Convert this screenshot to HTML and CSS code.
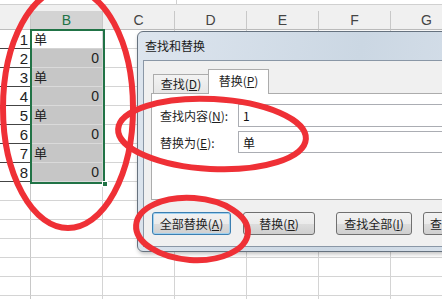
FILE: index.html
```html
<!DOCTYPE html>
<html lang="zh-CN">
<head>
  <meta charset="UTF-8" />
  <title>查找和替换</title>
  <link rel="stylesheet" href="styles.css">
</head>
<body>
  <div class="screen">
    <div class="formula-edge">
      <span class="seg seg-a"></span>
      <span class="seg seg-b"></span>
    </div>

    <div class="sheet">
      <div class="row heads">
        <div class="corner"></div>
        <div class="col-head picked">B</div>
        <div class="col-head">C</div>
        <div class="col-head">D</div>
        <div class="col-head">E</div>
        <div class="col-head">F</div>
        <div class="col-head">G</div>
      </div>

      <div class="row"><div class="rh on">1</div><div class="cell txt">单</div><div class="cell"></div><div class="cell"></div><div class="cell"></div><div class="cell"></div><div class="cell"></div></div>
      <div class="row"><div class="rh on">2</div><div class="cell sel num">0</div><div class="cell"></div><div class="cell"></div><div class="cell"></div><div class="cell"></div><div class="cell"></div></div>
      <div class="row"><div class="rh on">3</div><div class="cell sel txt">单</div><div class="cell"></div><div class="cell"></div><div class="cell"></div><div class="cell"></div><div class="cell"></div></div>
      <div class="row"><div class="rh on">4</div><div class="cell sel num">0</div><div class="cell"></div><div class="cell"></div><div class="cell"></div><div class="cell"></div><div class="cell"></div></div>
      <div class="row"><div class="rh on">5</div><div class="cell sel txt">单</div><div class="cell"></div><div class="cell"></div><div class="cell"></div><div class="cell"></div><div class="cell"></div></div>
      <div class="row"><div class="rh on">6</div><div class="cell sel num">0</div><div class="cell"></div><div class="cell"></div><div class="cell"></div><div class="cell"></div><div class="cell"></div></div>
      <div class="row"><div class="rh on">7</div><div class="cell sel txt">单</div><div class="cell"></div><div class="cell"></div><div class="cell"></div><div class="cell"></div><div class="cell"></div></div>
      <div class="row"><div class="rh on">8</div><div class="cell sel num">0</div><div class="cell"></div><div class="cell"></div><div class="cell"></div><div class="cell"></div><div class="cell"></div></div>
      <div class="row"><div class="rh"></div><div class="cell"></div><div class="cell"></div><div class="cell"></div><div class="cell"></div><div class="cell"></div><div class="cell"></div></div>
      <div class="row"><div class="rh"></div><div class="cell"></div><div class="cell"></div><div class="cell"></div><div class="cell"></div><div class="cell"></div><div class="cell"></div></div>
      <div class="row"><div class="rh"></div><div class="cell"></div><div class="cell"></div><div class="cell"></div><div class="cell"></div><div class="cell"></div><div class="cell"></div></div>
      <div class="row"><div class="rh"></div><div class="cell"></div><div class="cell"></div><div class="cell"></div><div class="cell"></div><div class="cell"></div><div class="cell"></div></div>
      <div class="row"><div class="rh"></div><div class="cell"></div><div class="cell"></div><div class="cell"></div><div class="cell"></div><div class="cell"></div><div class="cell"></div></div>
      <div class="row"><div class="rh"></div><div class="cell"></div><div class="cell"></div><div class="cell"></div><div class="cell"></div><div class="cell"></div><div class="cell"></div></div>
      <div class="row"><div class="rh"></div><div class="cell"></div><div class="cell"></div><div class="cell"></div><div class="cell"></div><div class="cell"></div><div class="cell"></div></div>
    </div>

    <!-- selected range B1:B8 -->
    <div class="selection"><span class="handle"></span></div>

    <div class="dialog">
      <div class="title">查找和替换</div>
      <div class="client">
        <div class="tabs">
          <div class="tab">查找(<u>D</u>)</div>
          <div class="tab current">替换(<u>P</u>)</div>
        </div>
        <div class="panel">
          <div class="field">
            <label>查找内容(<u>N</u>):</label>
            <input type="text" class="box" value="1" readonly>
          </div>
          <div class="field">
            <label>替换为(<u>E</u>):</label>
            <input type="text" class="box short" value="单" readonly>
          </div>
        </div>
        <div class="buttons">
          <button class="btn default">全部替换(<u>A</u>)</button>
          <button class="btn w72">替换(<u>R</u>)</button>
          <button class="btn w76">查找全部(<u>I</u>)</button>
          <button class="btn w100">查找下一个(<u>F</u>)</button>
        </div>
      </div>
    </div>

    <svg class="marks" width="442" height="299" viewBox="0 0 442 299">
      <ellipse cx="68" cy="108" rx="65" ry="120" />
      <ellipse cx="212" cy="134" rx="94" ry="35" transform="rotate(3 212 134)" />
      <ellipse cx="192" cy="229" rx="56" ry="31" transform="rotate(4 192 229)" />
    </svg>
  </div>
</body>
</html>
```

FILE: styles.css
```css
* {
  box-sizing: border-box;
  margin: 0;
  padding: 0;
}

body {
  background: #fff;
  font-family: "Liberation Sans", "Noto Sans CJK SC", sans-serif;
  color: #222;
}

.screen {
  position: relative;
  width: 442px;
  height: 299px;
  overflow: hidden;
  background: #f0f0f0;
}

/* bottom edge of the formula bar */
.formula-edge {
  height: 5px;
  background: #fff;
  border-bottom: 1px solid #d0d0d0;
  display: flex;
}

.seg {
  height: 4px;
  border-right: 1px solid #d0d0d0;
}

.seg-a { width: 38px; }
.seg-b { width: 139px; }

.sheet {
  margin-top: 6px;
}

.row {
  display: flex;
  height: 19px;
}

.heads {
  background: #f0f0f0;
}

.corner {
  width: 31px;
  flex: none;
  border-right: 1px solid #c8c8c8;
  border-bottom: 1px solid #bdbdbd;
}

.col-head {
  width: 72px;
  flex: none;
  border-right: 1px solid #c8c8c8;
  border-bottom: 1px solid #bdbdbd;
  text-align: center;
  font-size: 14px;
  line-height: 19px;
  color: #444;
}

.col-head.picked {
  background: #d3d3d3;
  color: #217346;
  border-bottom-color: #217346;
}

.rh {
  width: 31px;
  flex: none;
  background: #fff;
  border-right: 1px solid #c8c8c8;
  border-bottom: 1px solid #d4d4d4;
  text-align: right;
  padding-right: 2px;
  font-size: 15px;
  line-height: 19px;
  color: #222;
}

.rh.on {
  border-bottom-color: #444;
}

.cell {
  width: 72px;
  flex: none;
  background: #fff;
  border-right: 1px solid #d4d4d4;
  border-bottom: 1px solid #d4d4d4;
  font-size: 14px;
  line-height: 18px;
}

.cell.sel {
  background: #c6c6c6;
  border-bottom-color: #dadada;
}

.cell.txt {
  font-family: "Noto Sans CJK SC", sans-serif;
  font-size: 13px;
  padding-left: 3px;
}

.cell.num {
  text-align: right;
  padding-right: 3px;
}

.selection {
  position: absolute;
  left: 30px;
  top: 29px;
  width: 75px;
  height: 155px;
  border: 2px solid #217346;
}

.handle {
  position: absolute;
  right: -5px;
  bottom: -5px;
  width: 6px;
  height: 6px;
  background: #217346;
  border: 1px solid #fff;
}

/* find & replace window */
.dialog {
  position: absolute;
  left: 137px;
  top: 31px;
  width: 340px;
  height: 221px;
  border: 1px solid #66727f;
  border-radius: 6px 6px 0 6px;
  background: linear-gradient(100deg, #dde5ee 0%, #cbd7e3 60%, #d7e0ea 100%);
  box-shadow: 1px 2px 4px rgba(0, 0, 0, 0.25);
  font-family: "Noto Sans CJK SC", sans-serif;
  font-size: 12px;
  color: #1e1e1e;
}

.title {
  height: 28px;
  line-height: 28px;
  padding-left: 7px;
  color: #1a1a1a;
}

.client {
  margin-left: 5px;
  height: 187px;
  border: 1px solid #8a97a6;
  border-right: none;
  background: #f0f0f0;
  padding: 8px 0 0 7px;
}

.tabs {
  display: flex;
  align-items: flex-end;
  height: 24px;
  padding-left: 2px;
  position: relative;
  z-index: 1;
}

.tab {
  width: 55px;
  height: 19px;
  line-height: 18px;
  text-align: center;
  border: 1px solid #acacac;
  border-right: none;
  border-bottom: none;
  background: linear-gradient(#f3f3f3, #e6e6e6);
}

.tab.current {
  width: 61px;
  height: 25px;
  line-height: 22px;
  margin-bottom: -1px;
  background: #fff;
  border-right: 1px solid #acacac;
}

.panel {
  height: 107px;
  background: #fff;
  border: 1px solid #acacac;
  border-right: none;
  padding: 10px 0 0 8px;
}

.field {
  display: flex;
  align-items: center;
  margin-bottom: 4px;
}

.field label {
  width: 78px;
  flex: none;
}

.box {
  flex: 1;
  height: 23px;
  border: 1px solid #abadb3;
  border-right: none;
  padding-left: 4px;
  font-family: "Noto Sans CJK SC", sans-serif;
  font-size: 12px;
  color: #111;
  outline: none;
}

.box.short {
  height: 22px;
}

.buttons {
  display: flex;
  margin-top: 12px;
  padding-left: 1px;
}

.btn {
  height: 23px;
  width: 79px;
  flex: none;
  border: 1px solid #707070;
  border-radius: 3px;
  background: linear-gradient(#f2f2f2 0%, #ebebeb 50%, #dddddd 51%, #cfcfcf 100%);
  font-family: "Noto Sans CJK SC", sans-serif;
  font-size: 12px;
  color: #1e1e1e;
  margin-right: 12px;
}

.btn.default {
  border-color: #3c7fb1;
  box-shadow: inset 0 0 0 1px #9fd0ef;
}

.btn.w72 { width: 72px; margin-right: 21px; }
.btn.w76 { width: 76px; margin-right: 11px; }
.btn.w100 { width: 100px; text-align: left; padding-left: 6px; }

.marks {
  position: absolute;
  left: 0;
  top: 0;
  pointer-events: none;
}

.marks ellipse {
  fill: none;
  stroke: #ef3036;
  stroke-width: 6;
}
```
